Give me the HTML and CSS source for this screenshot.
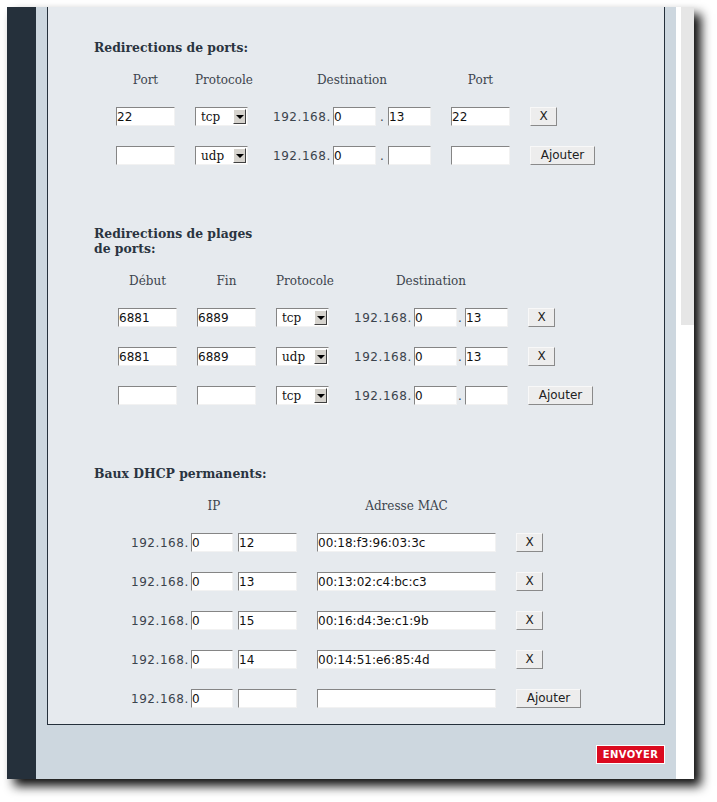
FILE: index.html
```html
<!DOCTYPE html>
<html lang="fr">
<head>
<meta charset="utf-8">
<title>Redirections</title>
<link rel="stylesheet" href="styles.css">
</head>
<body>
<div class="window">
  <div class="sidebar"></div>
  <div class="main">
    <div class="panel">
      <section class="block block-first">
        <h3 class="heading">Redirections de ports:</h3>
        <div class="grid grid-ports">
          <div class="th">Port</div>
          <div class="th">Protocole</div>
          <div class="th th-dest">Destination</div>
          <div class="th">Port</div>
          <div class="th"></div>

          <div class="td"><input class="field w59" type="text" value="22"></div>
          <div class="td"><div class="select"><span class="select-value">tcp</span><span class="select-arrow"></span></div></div>
          <div class="td td-dest"><span class="ip-prefix">192.168.</span><input class="field w43" type="text" value="0"><span class="dot dot-wide">.</span><input class="field w43" type="text" value="13"></div>
          <div class="td"><input class="field w59" type="text" value="22"></div>
          <div class="td"><button class="btn btn-x" type="button">X</button></div>

          <div class="td"><input class="field w59" type="text" value=""></div>
          <div class="td"><div class="select"><span class="select-value">udp</span><span class="select-arrow"></span></div></div>
          <div class="td td-dest"><span class="ip-prefix">192.168.</span><input class="field w43" type="text" value="0"><span class="dot dot-wide">.</span><input class="field w43" type="text" value=""></div>
          <div class="td"><input class="field w59" type="text" value=""></div>
          <div class="td"><button class="btn btn-add" type="button">Ajouter</button></div>
        </div>
      </section>

      <section class="block">
        <h3 class="heading">Redirections de plages<br>de ports:</h3>
        <div class="grid grid-ranges">
          <div class="th">Début</div>
          <div class="th">Fin</div>
          <div class="th">Protocole</div>
          <div class="th th-dest">Destination</div>
          <div class="th"></div>

          <div class="td"><input class="field w59" type="text" value="6881"></div>
          <div class="td"><input class="field w59" type="text" value="6889"></div>
          <div class="td"><div class="select"><span class="select-value">tcp</span><span class="select-arrow"></span></div></div>
          <div class="td td-dest"><span class="ip-prefix">192.168.</span><input class="field w43" type="text" value="0"><span class="dot dot-tight">.</span><input class="field w43" type="text" value="13"></div>
          <div class="td"><button class="btn btn-x" type="button">X</button></div>

          <div class="td"><input class="field w59" type="text" value="6881"></div>
          <div class="td"><input class="field w59" type="text" value="6889"></div>
          <div class="td"><div class="select"><span class="select-value">udp</span><span class="select-arrow"></span></div></div>
          <div class="td td-dest"><span class="ip-prefix">192.168.</span><input class="field w43" type="text" value="0"><span class="dot dot-tight">.</span><input class="field w43" type="text" value="13"></div>
          <div class="td"><button class="btn btn-x" type="button">X</button></div>

          <div class="td"><input class="field w59" type="text" value=""></div>
          <div class="td"><input class="field w59" type="text" value=""></div>
          <div class="td"><div class="select"><span class="select-value">tcp</span><span class="select-arrow"></span></div></div>
          <div class="td td-dest"><span class="ip-prefix">192.168.</span><input class="field w43" type="text" value="0"><span class="dot dot-tight">.</span><input class="field w43" type="text" value=""></div>
          <div class="td"><button class="btn btn-add" type="button">Ajouter</button></div>
        </div>
      </section>

      <section class="block">
        <h3 class="heading">Baux DHCP permanents:</h3>
        <div class="grid grid-dhcp">
          <div class="th">IP</div>
          <div class="th">Adresse MAC</div>
          <div class="th"></div>

          <div class="td"><span class="ip-prefix">192.168.</span><input class="field w42" type="text" value="0"><input class="field w59 gap5" type="text" value="12"></div>
          <div class="td"><input class="field w179" type="text" value="00:18:f3:96:03:3c"></div>
          <div class="td"><button class="btn btn-x" type="button">X</button></div>

          <div class="td"><span class="ip-prefix">192.168.</span><input class="field w42" type="text" value="0"><input class="field w59 gap5" type="text" value="13"></div>
          <div class="td"><input class="field w179" type="text" value="00:13:02:c4:bc:c3"></div>
          <div class="td"><button class="btn btn-x" type="button">X</button></div>

          <div class="td"><span class="ip-prefix">192.168.</span><input class="field w42" type="text" value="0"><input class="field w59 gap5" type="text" value="15"></div>
          <div class="td"><input class="field w179" type="text" value="00:16:d4:3e:c1:9b"></div>
          <div class="td"><button class="btn btn-x" type="button">X</button></div>

          <div class="td"><span class="ip-prefix">192.168.</span><input class="field w42" type="text" value="0"><input class="field w59 gap5" type="text" value="14"></div>
          <div class="td"><input class="field w179" type="text" value="00:14:51:e6:85:4d"></div>
          <div class="td"><button class="btn btn-x" type="button">X</button></div>

          <div class="td"><span class="ip-prefix">192.168.</span><input class="field w42" type="text" value="0"><input class="field w59 gap5" type="text" value=""></div>
          <div class="td"><input class="field w179" type="text" value=""></div>
          <div class="td"><button class="btn btn-add" type="button">Ajouter</button></div>
        </div>
      </section>
    </div>
    <div class="footer">
      <button class="btn-send" type="button">ENVOYER</button>
    </div>
  </div>
  <div class="scrollbar"><div class="scroll-thumb"></div></div>
</div>
</body>
</html>
```

FILE: styles.css
```css
html, body {
  margin: 0;
  padding: 0;
  background: #ffffff;
}

body {
  width: 717px;
  height: 802px;
  overflow: hidden;
  font-family: "DejaVu Serif", serif;
}

.window {
  margin: 7px 0 0 7px;
  width: 687px;
  height: 772px;
  display: flex;
  box-shadow: 7px 7px 10px rgba(0, 0, 0, 0.95);
  overflow: hidden;
}

.sidebar {
  width: 29px;
  flex: none;
  background: #25303b;
}

.main {
  width: 640px;
  flex: none;
  background: #cdd7df;
  display: flex;
  flex-direction: column;
}

.panel {
  margin-left: 11px;
  width: 618px;
  box-sizing: border-box;
  height: 718px;
  background: #e6eaee;
  border: 1px solid #25303b;
  border-top: none;
  padding: 33px 0 16px 46px;
}

.block {
  margin-top: 61px;
}

.block-first {
  margin-top: 0;
}

.heading {
  margin: 0 0 17px 0;
  white-space: nowrap;
  font-family: "DejaVu Serif", serif;
  font-weight: bold;
  font-size: 12.4px;
  line-height: 15px;
  color: #2a3440;
}

.grid {
  display: grid;
  column-gap: 20px;
  row-gap: 20px;
  grid-auto-rows: 19px;
  grid-template-rows: 15px;
}

.grid-ports {
  margin-left: 22px;
  grid-template-columns: 59px 53px 163px 59px auto;
}

.grid-ranges {
  margin-left: 24px;
  grid-template-columns: 59px 59px 53px 159px auto;
}

.grid-dhcp {
  margin-left: 37px;
  grid-template-columns: 166px 179px auto;
}

.th {
  font-family: "DejaVu Serif", serif;
  font-size: 12px;
  line-height: 15px;
  padding-top: 1px;
  text-align: center;
  color: #3c444d;
  white-space: nowrap;
}

.th-dest {
  padding-left: 5px;
}

.td {
  display: flex;
  align-items: center;
  height: 19px;
}

.td-dest {
  padding-left: 5px;
}

.ip-prefix {
  width: 60px;
  flex: none;
  font-family: "DejaVu Sans", sans-serif;
  font-size: 12px;
  letter-spacing: 0.55px;
  color: #3c444d;
}

.dot {
  flex: none;
  font-family: "DejaVu Sans", sans-serif;
  font-size: 12px;
  color: #3c444d;
}

.dot-wide {
  width: 12px;
  text-align: center;
}

.dot-tight {
  width: 8px;
  text-align: left;
  padding-left: 1px;
  box-sizing: border-box;
}

.field {
  box-sizing: border-box;
  height: 19px;
  margin: 0;
  padding: 0 1px 0 0;
  border: 1px solid;
  border-color: #858585 #f2f2f2 #f2f2f2 #858585;
  background: #ffffff;
  font-family: "DejaVu Sans", sans-serif;
  font-size: 12px;
  color: #111;
  outline: none;
  flex: none;
}

.w59 { width: 59px; }
.w43 { width: 43px; }
.w42 { width: 42px; }
.w179 { width: 179px; }
.gap5 { margin-left: 5px; }

.select {
  box-sizing: border-box;
  width: 53px;
  height: 19px;
  border: 1px solid;
  border-color: #858585 #f2f2f2 #f2f2f2 #858585;
  background: #ffffff;
  display: flex;
  align-items: center;
  justify-content: space-between;
  padding: 0 1px 0 5px;
}

.select-value {
  font-family: "DejaVu Serif", serif;
  font-size: 12px;
  color: #111;
}

.select-arrow {
  box-sizing: border-box;
  width: 13px;
  height: 15px;
  background: #d6d3cd;
  border: 1px solid;
  border-color: #ffffff #404040 #404040 #ffffff;
  display: flex;
  align-items: center;
  justify-content: center;
}

.select-arrow::after {
  content: "";
  width: 0;
  height: 0;
  border-top: 4px solid #000;
  border-left: 4px solid transparent;
  border-right: 4px solid transparent;
  margin-top: 1px;
}

.btn {
  box-sizing: border-box;
  height: 19px;
  margin: 0;
  padding: 0;
  border: 1px solid;
  border-color: #f8f8f8 #8a8a8a #8a8a8a #f8f8f8;
  background: #ededed;
  font-family: "DejaVu Sans", sans-serif;
  font-size: 12px;
  color: #222;
  line-height: 17px;
}

.btn-x {
  width: 27px;
}

.btn-add {
  width: 65px;
}

.footer {
  display: flex;
  justify-content: flex-end;
  padding: 20px 11px 0 0;
}

.btn-send {
  box-sizing: border-box;
  width: 69px;
  height: 19px;
  margin: 0;
  padding: 0;
  border: 1px solid #ffffff;
  background: #db0a1f;
  color: #ffffff;
  font-family: "DejaVu Sans", sans-serif;
  font-weight: bold;
  font-size: 10px;
  letter-spacing: 0.4px;
  line-height: 17px;
}

.scrollbar {
  width: 18px;
  flex: none;
  background: #ffffff;
}

.scroll-thumb {
  margin-left: 5px;
  width: 13px;
  height: 318px;
  background: #e6e6e6;
}
```
